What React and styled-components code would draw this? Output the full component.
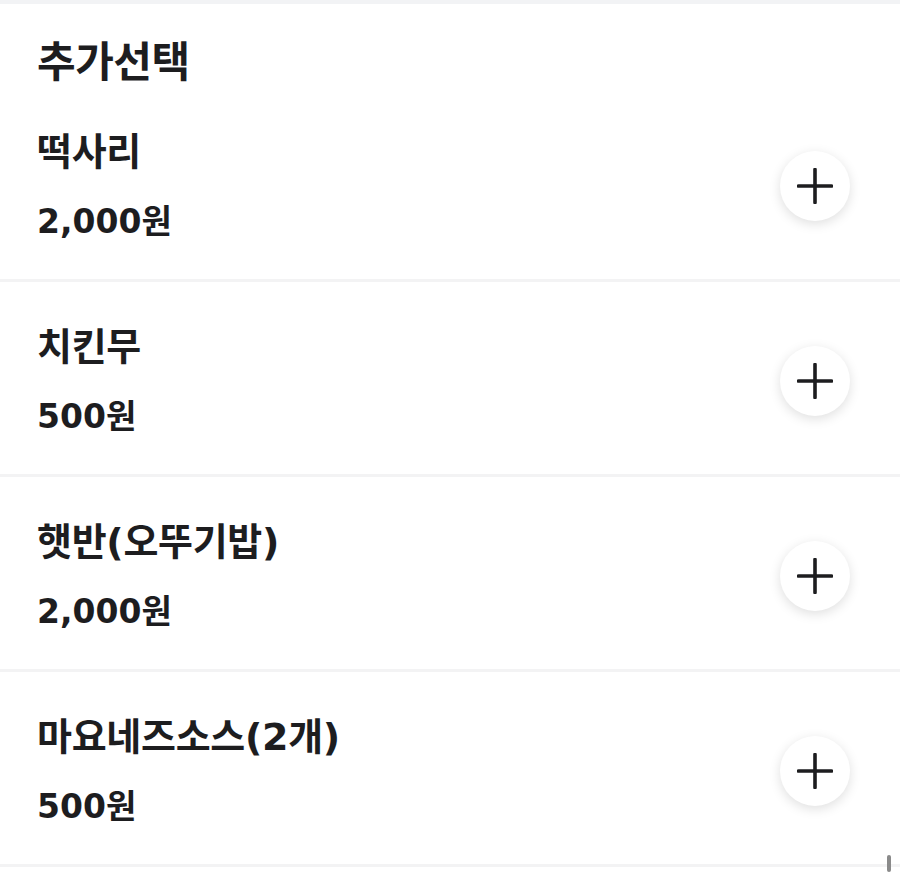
import React from "react";
import styled, { createGlobalStyle } from "styled-components";

const Global = createGlobalStyle`
  html, body { margin: 0; padding: 0; background: #fff; }
  body { font-family: "Noto Sans CJK KR", "Noto Sans", sans-serif; color: #1d1d1f; }
  * { box-sizing: border-box; }
`;

const Page = styled.div`
  position: relative;
  width: 900px;
  height: 872px;
  overflow: hidden;
  background: #fff;
  border-top: 4px solid #f2f3f5;
`;

const Header = styled.h2`
  margin: 0;
  padding: 30px 37px 0;
  height: 83px;
  font-size: 42px;
  font-weight: 700;
  line-height: 50px;
  letter-spacing: -0.5px;
`;

const Item = styled.div`
  display: flex;
  align-items: center;
  justify-content: space-between;
  height: 195px;
  padding: 0 50px 0 37px;
  border-bottom: 3px solid #f3f3f4;
`;

const Info = styled.div`
  display: flex;
  flex-direction: column;
  gap: 24px;
  margin-top: 8px;
`;

const Name = styled.div`
  font-family: "DejaVu Sans", "Noto Sans CJK KR", sans-serif;
  font-size: 38px;
  font-weight: 700;
  line-height: 46px;
  letter-spacing: -0.3px;
`;

const Price = styled.div`
  font-family: "DejaVu Sans", "Noto Sans CJK KR", sans-serif;
  font-size: 33px;
  font-weight: 700;
  line-height: 46px;
`;

const AddButton = styled.button`
  width: 70px;
  height: 70px;
  border-radius: 50%;
  border: none;
  background: #fff;
  box-shadow: 0 3px 12px rgba(0, 0, 0, 0.13);
  display: flex;
  align-items: center;
  justify-content: center;
  padding: 0;
  margin-top: 6px;
  cursor: pointer;
`;

const Scrollbar = styled.div`
  position: absolute;
  right: 9px;
  bottom: 0;
  width: 4px;
  height: 17px;
  border-radius: 2px;
  background: #8a8a8a;
`;

const PlusIcon = () => (
  <svg width="36" height="36" viewBox="0 0 36 36" fill="none">
    <path d="M18 1.5v33M1.5 18h33" stroke="#1d1d1f" strokeWidth="3.6" strokeLinecap="round" />
  </svg>
);

const items = [
  { name: "떡사리", price: "2,000원" },
  { name: "치킨무", price: "500원" },
  { name: "햇반(오뚜기밥)", price: "2,000원" },
  { name: "마요네즈소스(2개)", price: "500원" },
];

export default function App() {
  return (
    <>
      <Global />
      <Page>
        <Header>추가선택</Header>
        {items.map((it) => (
          <Item key={it.name}>
            <Info>
              <Name>{it.name}</Name>
              <Price>{it.price}</Price>
            </Info>
            <AddButton aria-label="추가">
              <PlusIcon />
            </AddButton>
          </Item>
        ))}
        <Scrollbar />
      </Page>
    </>
  );
}
